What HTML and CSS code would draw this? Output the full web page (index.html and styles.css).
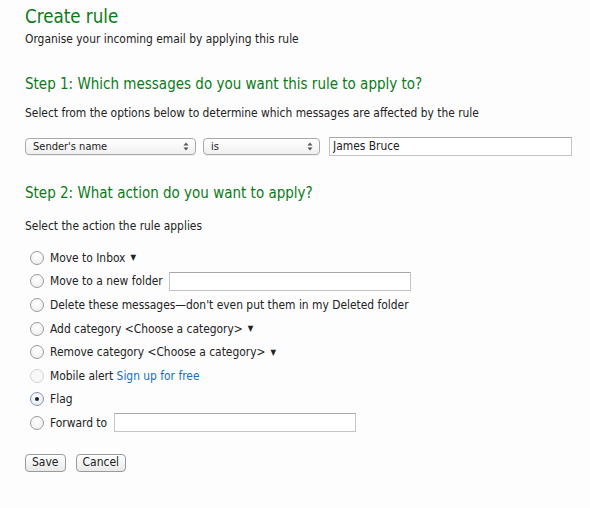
FILE: index.html
```html
<!DOCTYPE html>
<html>
<head>
<meta charset="utf-8">
<link rel="stylesheet" href="styles.css">
</head>
<body>
<div class="page">
  <h1 class="title">Create rule</h1>
  <p class="subtitle">Organise your incoming email by applying this rule</p>

  <h2 class="step step1">Step 1: Which messages do you want this rule to apply to?</h2>
  <p class="desc">Select from the options below to determine which messages are affected by the rule</p>
  <div class="criteria">
    <span class="select sel-field">Sender's name
      <svg class="arrows" width="6" height="9" viewBox="0 0 6 9"><path d="M3 0.5L5.5 3.5H0.5Z M3 8.5L5.5 5.5H0.5Z" fill="#555"/></svg>
    </span>
    <span class="select sel-op">is
      <svg class="arrows" width="6" height="9" viewBox="0 0 6 9"><path d="M3 0.5L5.5 3.5H0.5Z M3 8.5L5.5 5.5H0.5Z" fill="#555"/></svg>
    </span>
    <input class="text value" type="text" value="James Bruce">
  </div>

  <h2 class="step step2">Step 2: What action do you want to apply?</h2>
  <p class="desc desc2">Select the action the rule applies</p>

  <ul class="actions">
    <li class="action"><span class="radio"></span><span>Move to Inbox</span><span class="tri">▼</span></li>
    <li class="action"><span class="radio"></span><span>Move to a new folder</span><input class="text folder" type="text"></li>
    <li class="action"><span class="radio"></span><span>Delete these messages—don't even put them in my Deleted folder</span></li>
    <li class="action"><span class="radio"></span><span>Add category &lt;Choose a category&gt;</span><span class="tri">▼</span></li>
    <li class="action"><span class="radio"></span><span>Remove category &lt;Choose a category&gt;</span><span class="tri">▼</span></li>
    <li class="action"><span class="radio disabled"></span><span>Mobile alert <a class="link" href="#">Sign up for free</a></span></li>
    <li class="action"><span class="radio checked"></span><span>Flag</span></li>
    <li class="action"><span class="radio"></span><span>Forward to</span><input class="text forward" type="text"></li>
  </ul>

  <div class="buttons">
    <button class="btn">Save</button>
    <button class="btn">Cancel</button>
  </div>
</div>
</body>
</html>
```

FILE: styles.css
```css
html, body {
  margin: 0;
  padding: 0;
  background: #fdfdfd;
}
body {
  font-family: "DejaVu Sans Condensed", "DejaVu Sans", Verdana, sans-serif;
  font-size: 11.9px;
  color: #222;
}
.page {
  padding: 5px 0 0 25px;
}
.title {
  margin: 0;
  font-size: 18.6px;
  font-weight: normal;
  color: #0c7a1a;
  line-height: 24px;
}
.subtitle {
  margin: 2px 0 0 0;
  line-height: 16px;
}
.step {
  margin: 0;
  font-size: 15px;
  font-weight: normal;
  color: #0c7a1a;
  line-height: 20px;
}
.step1 { margin-top: 27px; }
.step2 { margin-top: 27px; }
.desc {
  margin: 11px 0 0 0;
  line-height: 16px;
}
.desc2 { margin-top: 15px; }
.criteria {
  display: flex;
  align-items: center;
  margin-top: 15px;
  height: 20px;
}
.select {
  position: relative;
  box-sizing: border-box;
  height: 17px;
  border: 1px solid #a9a9a9;
  border-radius: 4px;
  background: linear-gradient(#ffffff, #f0f0f0);
  padding-left: 7px;
  line-height: 15px;
  font-size: 11px;
  box-shadow: 0 1px 0 rgba(0,0,0,0.05);
}
.sel-field { width: 171px; }
.sel-op { width: 117px; margin-left: 7px; }
.arrows {
  position: absolute;
  right: 6px;
  top: 3px;
}
.text {
  box-sizing: border-box;
  height: 19px;
  border: 1px solid #c4c4c4;
  border-top-color: #a8a8a8;
  background: #fff;
  font-family: inherit;
  font-size: 11.9px;
  color: #222;
  padding: 0 3px;
  margin: 0;
  outline: none;
}
.value { width: 243px; margin-left: 9px; }
.actions {
  list-style: none;
  margin: 12px 0 0 0;
  padding: 0;
  display: flex;
  flex-direction: column;
}
.action {
  display: flex;
  align-items: center;
  height: 23.6px;
}
.radio {
  box-sizing: border-box;
  width: 14px;
  height: 14px;
  border-radius: 50%;
  border: 1px solid #9a9a9a;
  background: radial-gradient(circle at 50% 30%, #ffffff, #ececec);
  margin: 0 6px 0 5px;
  display: flex;
  align-items: center;
  justify-content: center;
  flex: none;
}
.radio.disabled {
  border-color: #d2d2d2;
  background: #f8f8f8;
}
.radio.checked {
  border-color: #7d93b8;
  background: radial-gradient(circle at 50% 30%, #ffffff, #dfe6f2);
}
.radio.checked::after {
  content: "";
  width: 4px;
  height: 4px;
  border-radius: 50%;
  background: #222;
}
.tri {
  font-size: 8px;
  margin-left: 5px;
  color: #222;
}
.folder { width: 242px; margin-left: 6px; }
.forward { width: 242px; margin-left: 7px; }
.link {
  color: #1470c0;
  text-decoration: none;
}
.buttons {
  display: flex;
  gap: 10px;
  margin-top: 19px;
}
.btn {
  box-sizing: border-box;
  height: 18px;
  padding: 0 6px;
  border: 1px solid #9a9a9a;
  border-radius: 4px;
  background: linear-gradient(#ffffff, #e9e9e9);
  font-family: inherit;
  font-size: 12px;
  color: #222;
  line-height: 15px;
}
```
